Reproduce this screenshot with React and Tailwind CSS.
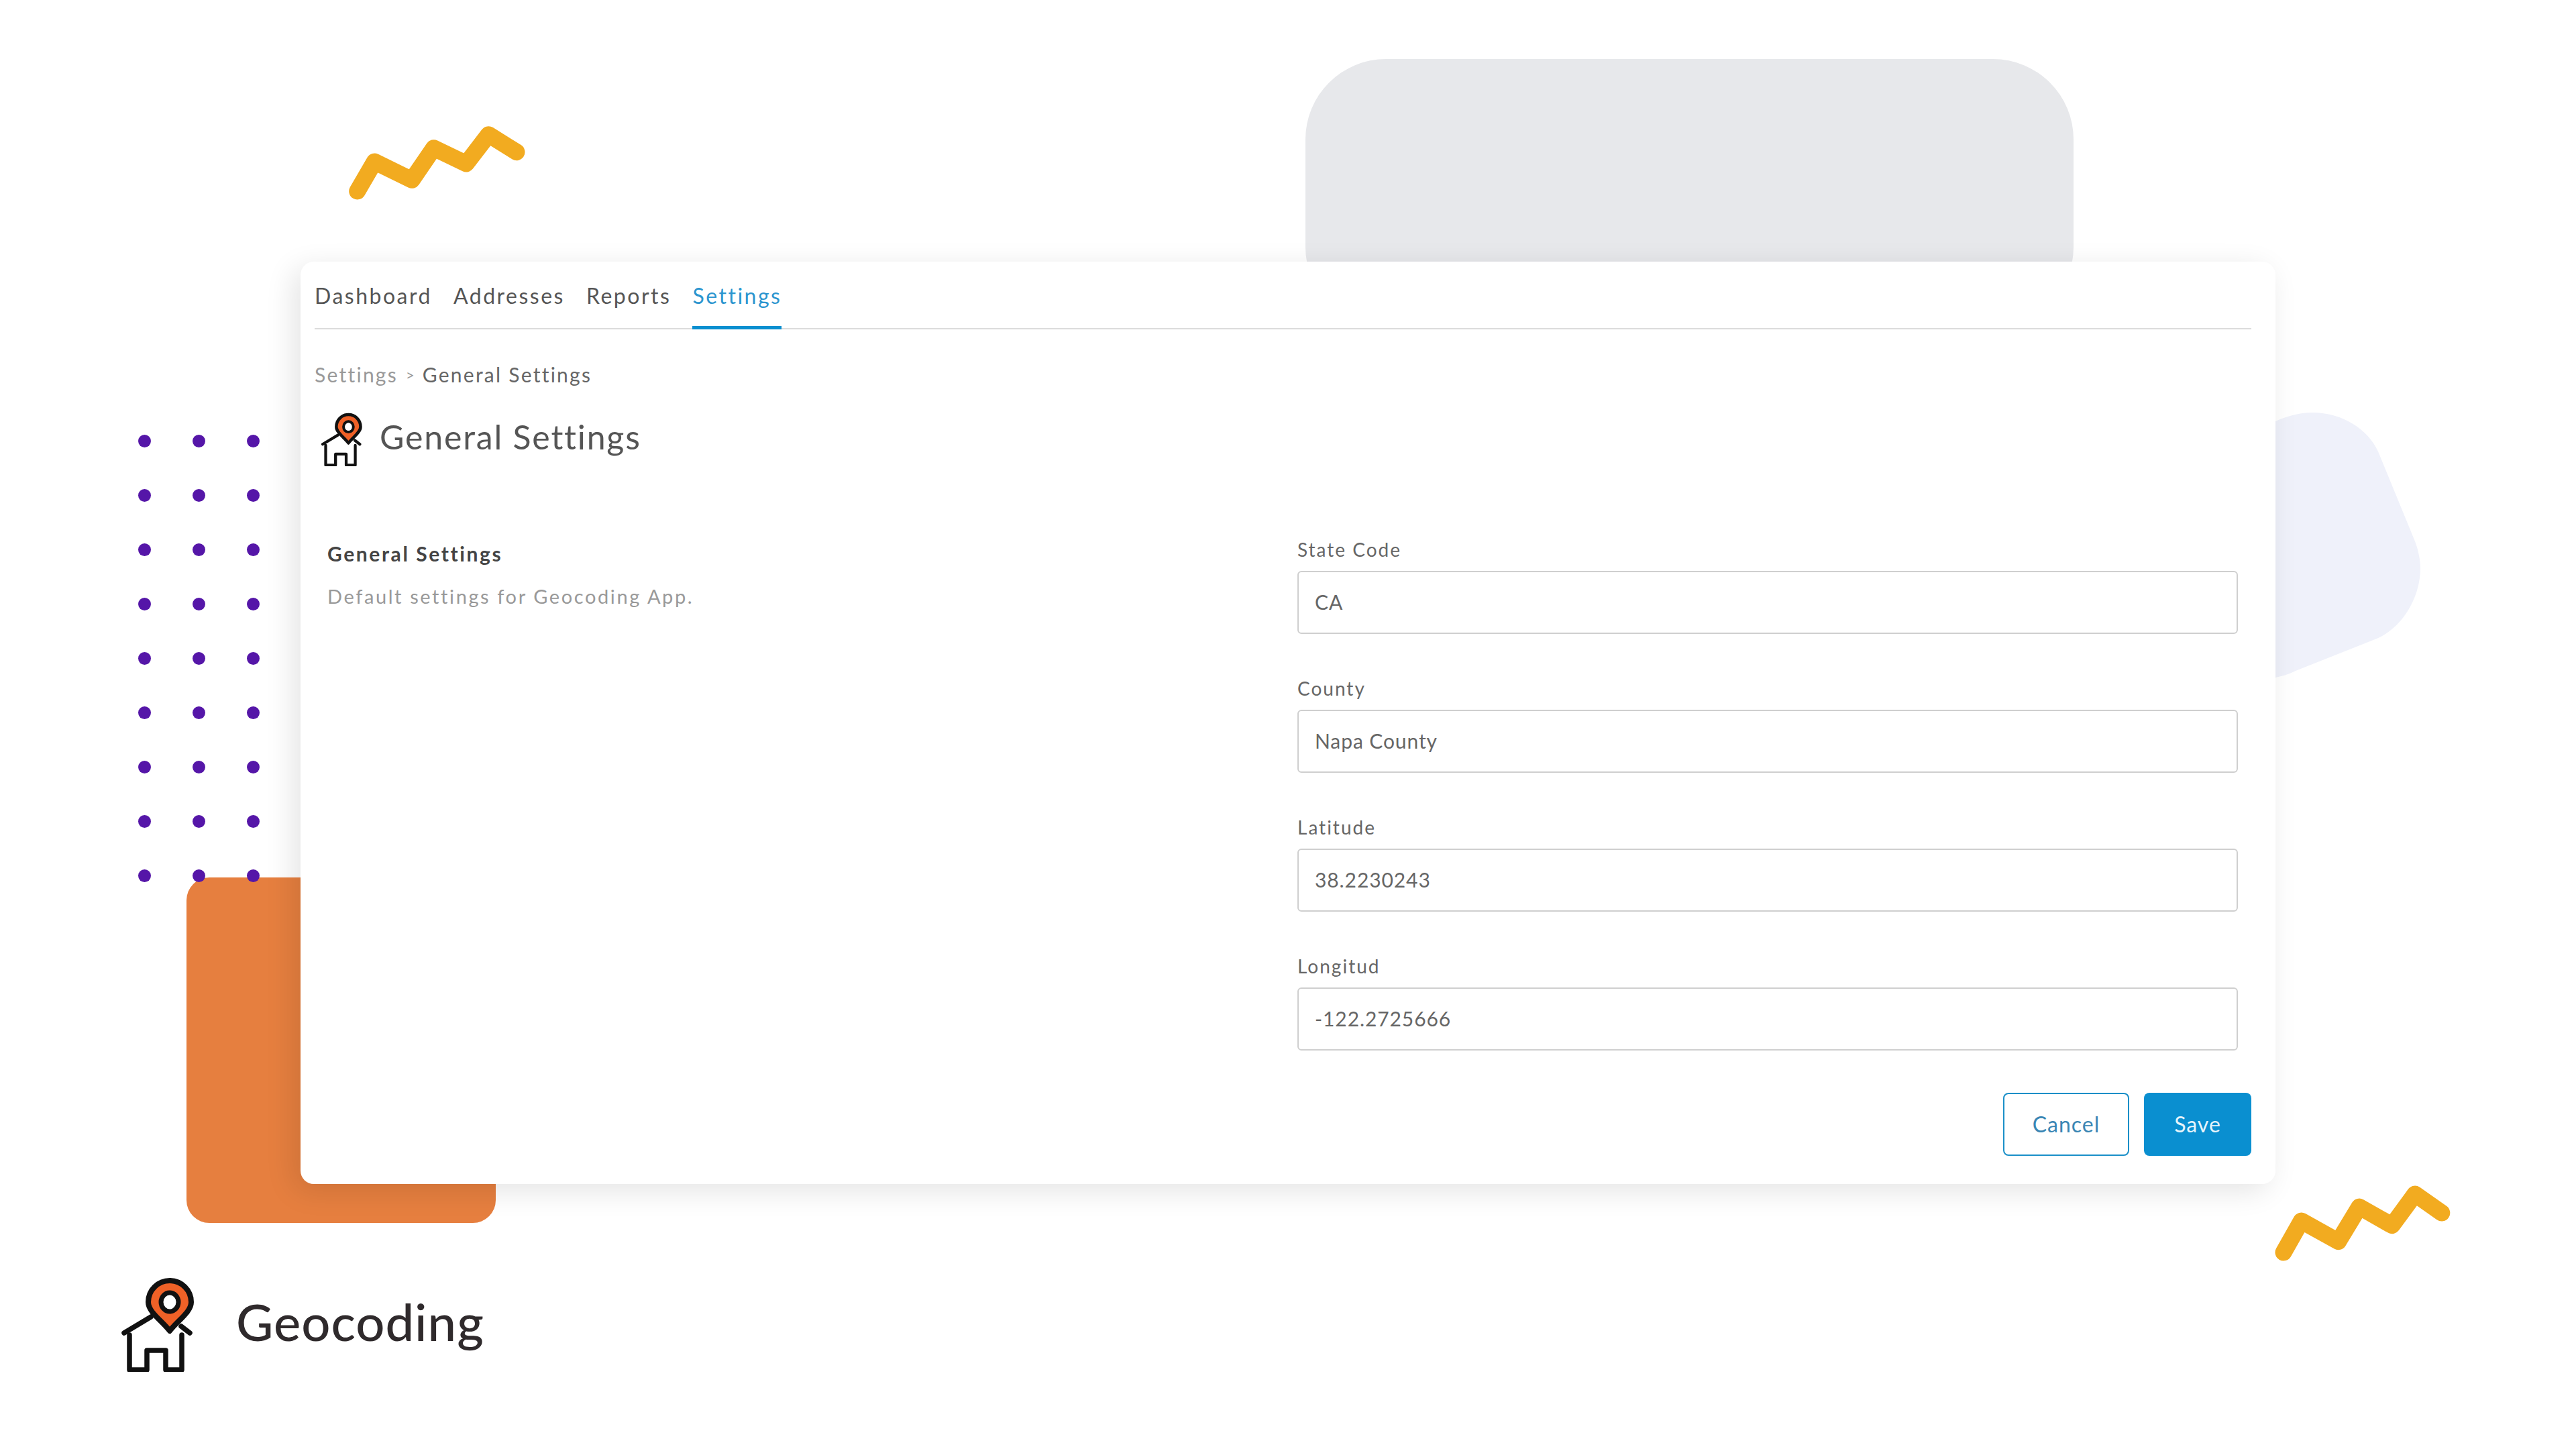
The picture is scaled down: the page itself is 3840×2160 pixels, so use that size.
const tabs = ['Dashboard', 'Addresses', 'Reports', 'Settings']

const fields = [
  { label: 'State Code', value: 'CA' },
  { label: 'County', value: 'Napa County' },
  { label: 'Latitude', value: '38.2230243' },
  { label: 'Longitud', value: '-122.2725666' },
]

const dots = Array.from({ length: 27 })

function Logo({ className }) {
  return (
    <svg viewBox="0 0 118 145" className={className} fill="none" strokeLinecap="round" strokeLinejoin="round">
      <path d="M5 87 L45 63 M90 77 L103 87" stroke="#111" strokeWidth="7.5" />
      <path d="M13 90 V142 H39 V113 H67 V142 H91 V90" stroke="#111" strokeWidth="7.5" />
      <path d="M73 84 C62 69 41 56 41 41 A32 32 0 0 1 105 41 C105 56 84 69 73 84Z" fill="#ef6127" stroke="#111" strokeWidth="8" />
      <ellipse cx="73" cy="41" rx="13" ry="14" fill="#fff" stroke="#111" strokeWidth="7" />
    </svg>
  )
}

function Squiggle({ points, className, viewBox }) {
  return (
    <svg viewBox={viewBox} className={className} fill="none">
      <polyline points={points} stroke="#f2ab20" strokeWidth="25" strokeLinecap="round" strokeLinejoin="round" />
    </svg>
  )
}

export default function App() {
  return (
    <div className="relative w-[3840px] h-[2160px] overflow-hidden bg-white font-['Lato','Noto_Sans',sans-serif]">
      {/* background shapes */}
      <div className="absolute left-[1946px] top-[88px] w-[1145px] h-[400px] rounded-[120px] bg-[#e7e8eb]" />
      <svg viewBox="0 0 220 420" className="absolute left-[3392px] top-[600px] w-[220px] h-[420px]">
        <path d="M0 28 C20 19 38 15 55 15 C100 15 138 40 153 73 L208 207 C213 220 216 235 216 247 C216 290 190 335 151 352 L30 400 C20 405 10 408 0 410 Z" fill="#eff1fa" />
      </svg>
      <div className="absolute left-[278px] top-[1308px] w-[461px] h-[515px] rounded-[34px] bg-[#e67f3f]" />
      <div className="absolute left-[206px] top-[648px] grid grid-cols-[19px_19px_19px] gap-x-[62px] gap-y-[62px]">
        {dots.map((_, i) => (
          <span key={i} className="w-[19px] h-[19px] rounded-full bg-[#5516a8]" />
        ))}
      </div>
      <Squiggle
        viewBox="510 180 280 125"
        points="532.7,285 558.3,241 614,268.3 646.7,220.7 695,244 728.3,200.7 770,226.7"
        className="absolute left-[510px] top-[180px] w-[280px] h-[125px]"
      />
      <Squiggle
        viewBox="3380 1760 280 125"
        points="3404,1867 3430.6,1820 3485.7,1850.7 3517,1799 3565.8,1826.7 3600,1780 3639.8,1808"
        className="absolute left-[3380px] top-[1760px] w-[280px] h-[125px]"
      />

      {/* card */}
      <div className="absolute left-[448px] top-[390px] w-[2944px] h-[1375px] rounded-[20px] bg-white pl-[21px] pr-[36px] shadow-[-10px_10px_44px_rgba(0,0,0,0.11)]">
        <nav className="flex gap-[32px] h-[101px] border-b-2 border-[#dcdcdc]">
          {tabs.map((t) => (
            <a
              key={t}
              className={
                t === 'Settings'
                  ? 'h-[101px] flex items-center pt-[5px] text-[32px] tracking-[2.5px] text-[#2b95cf] border-b-[5px] border-[#0a8fd0]'
                  : 'h-[101px] flex items-center pt-[5px] text-[32px] tracking-[2.5px] text-[#555] border-b-[5px] border-transparent'
              }
            >
              {t}
            </a>
          ))}
        </nav>

        <div className="mt-[47px] h-[40px] flex items-center text-[30px] tracking-[2.25px] text-[#999]">
          <span>Settings</span>
          <span className="mx-[12px] text-[22px] tracking-normal">&gt;</span>
          <span className="text-[#666]">General Settings</span>
        </div>

        <div className="mt-[35px] h-[82px] flex items-center">
          <Logo className="ml-[9px] w-[67px] h-[82px]" />
          <h1 className="ml-[21px] mt-[-5px] text-[50px] font-normal tracking-[1.8px] text-[#555]">General Settings</h1>
        </div>

        <div className="mt-[107px] flex">
          <div className="flex-1 pl-[19px] pt-[3px]">
            <h2 className="text-[30px] leading-[40px] font-bold tracking-[2.6px] text-[#444]">General Settings</h2>
            <p className="mt-[24px] text-[29px] leading-[40px] tracking-[2.6px] text-[#999]">Default settings for Geocoding App.</p>
          </div>
          <div className="w-[1402px] mr-[20px] flex flex-col gap-[64px]">
            {fields.map((f) => (
              <label key={f.label} className="block">
                <span className="block h-[36px] leading-[34px] text-[28px] tracking-[2px] text-[#666]">{f.label}</span>
                <input
                  readOnly
                  value={f.value}
                  className="mt-[13px] block w-full h-[94px] px-[24px] pb-[2px] rounded-[6px] border-2 border-[#cfcfcf] bg-white text-[30px] tracking-[0.9px] text-[#666] font-['Lato','Noto_Sans',sans-serif]"
                />
              </label>
            ))}
          </div>
        </div>

        <div className="mt-[63px] flex justify-end gap-[22px]">
          <button className="w-[188px] h-[94px] rounded-[8px] border-2 border-[#1a8fc8] bg-white text-[32px] tracking-[1px] text-[#3a86b4]">Cancel</button>
          <button className="w-[160px] h-[94px] rounded-[8px] bg-[#0a8fd0] text-[32px] tracking-[1px] text-[#e6f4fb]">Save</button>
        </div>
      </div>

      {/* brand */}
      <div className="absolute left-[180px] top-[1900px] flex items-center h-[145px]">
        <Logo className="w-[118px] h-[145px]" />
        <span className="ml-[54px] mt-[-6px] text-[76px] font-medium tracking-[1px] text-[#2f2a2c]">Geocoding</span>
      </div>
    </div>
  )
}
